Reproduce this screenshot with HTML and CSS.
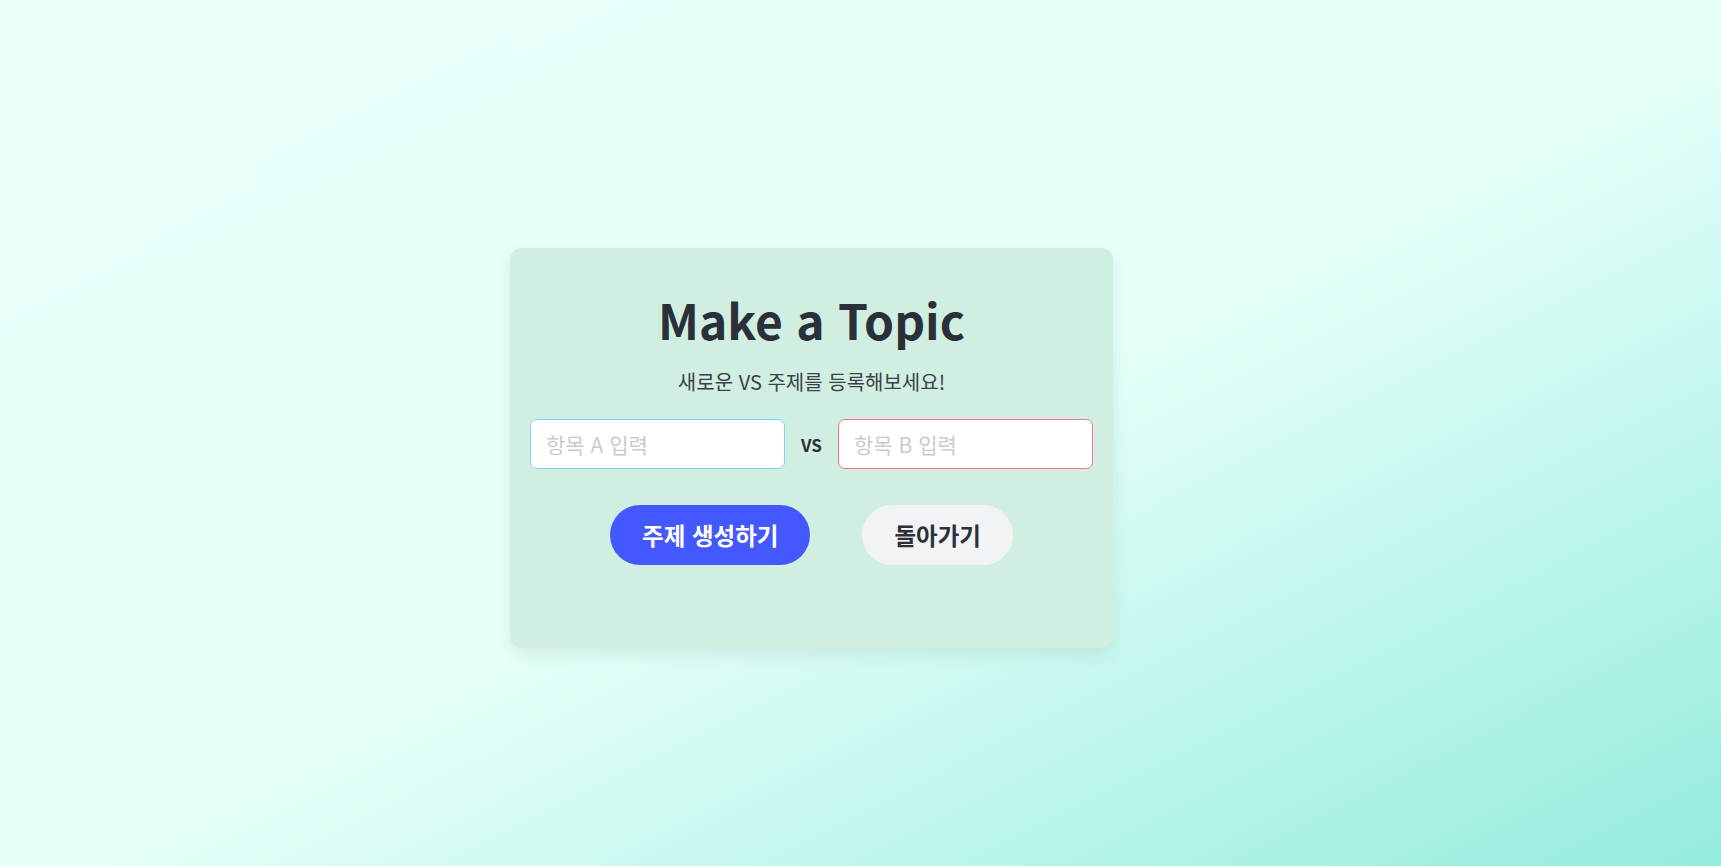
FILE: index.html
```html
<!DOCTYPE html>
<html lang="ko">
<head>
<meta charset="utf-8">
<title>Make a Topic</title>
<link rel="stylesheet" href="styles.css">
</head>
<body>
<main class="page">
  <section class="card">
    <h1 class="title">Make a Topic</h1>
    <p class="subtitle">새로운 VS 주제를 등록해보세요!</p>
    <div class="inputs">
      <input class="field field-a" type="text" placeholder="항목 A 입력">
      <span class="vs">VS</span>
      <input class="field field-b" type="text" placeholder="항목 B 입력">
    </div>
    <div class="actions">
      <button class="btn btn-primary" type="button">주제 생성하기</button>
      <button class="btn btn-secondary" type="button">돌아가기</button>
    </div>
  </section>
</main>
</body>
</html>
```

FILE: styles.css
```css
* { box-sizing: border-box; }
html, body { margin: 0; padding: 0; }
body {
  font-family: "Noto Sans CJK KR", "Noto Sans", sans-serif;
  background: linear-gradient(to bottom right, #e8fffa 0%, #e6fffa 52%, #94ecdd 100%);
  min-height: 100vh;
  color: #2b303b;
}
.page {
  min-height: 100vh;
  display: flex;
  align-items: center;
  justify-content: center;
  padding: 30px 98px 0 0;
}
.card {
  width: 603px;
  height: 400px;
  background: #d0efe0;
  border-radius: 12px;
  box-shadow: 0 6px 18px rgba(0, 0, 0, 0.08);
  padding: 38px 20px 40px;
  display: flex;
  flex-direction: column;
  align-items: center;
}
.title {
  margin: 0;
  font-size: 48px;
  font-weight: 700;
  color: #2a2f3a;
  line-height: 1.4;
}
.subtitle {
  margin: 15px 0 0;
  font-size: 20px;
  color: #3a404c;
  line-height: 1.4;
}
.inputs {
  width: 100%;
  display: flex;
  align-items: center;
  gap: 16px;
  margin-top: 23px;
}
.field {
  flex: 1;
  min-width: 0;
  height: 50px;
  border-radius: 7px;
  background: #fff;
  padding: 0 15px;
  font-family: inherit;
  font-size: 21px;
  color: #2b303b;
  outline: none;
}
.field::placeholder { color: #c9cad1; }
.field-a { border: 1px solid #7dd3fc; }
.field-b { border: 1px solid #f7718a; }
.vs {
  font-size: 17px;
  font-weight: 700;
  color: #2b303b;
}
.actions {
  display: flex;
  gap: 52px;
  margin-top: 36px;
}
.btn {
  height: 60px;
  padding: 0 32px;
  border: none;
  border-radius: 30px;
  font-family: inherit;
  font-size: 23.5px;
  font-weight: 700;
  cursor: pointer;
}
.btn-primary { background: #4458ff; color: #fff; }
.btn-secondary { background: #f2f3f5; color: #2b303b; }
```
